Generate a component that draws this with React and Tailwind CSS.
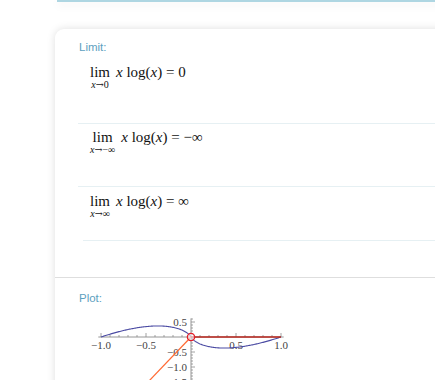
import React from "react";

const X0 = 101;
const Y0 = 26;
const SX = 90;
const SY = 30;

const px = (x) => X0 + x * SX;
const py = (y) => Y0 - y * SY;

// real part of x*log(x)
const bluePath = () => {
  let d = "";
  for (let i = 0; i <= 200; i++) {
    const x = -1 + i * 0.01;
    const v = Math.abs(x) < 1e-9 ? 0 : x * Math.log(Math.abs(x));
    d += (i === 0 ? "M" : "L") + px(x).toFixed(2) + " " + py(v).toFixed(2) + " ";
  }
  return d;
};

const Lim = ({ sub, expr, pl }) => (
  <div className={`flex items-start ${pl}`}>
    <div className="flex flex-col items-center">
      <span className="text-[15px] leading-[18px]">lim</span>
      <span className="text-[10px] leading-[10px] -mt-[1px]">{sub}</span>
    </div>
    <span className="text-[15px] leading-[18px] ml-[6px]">{expr}</span>
  </div>
);

const Arrow = () => <span style={{ fontFamily: "'DejaVu Serif', serif", fontSize: 9.5 }}>→</span>;

const Plot = () => {
  const minor = [];
  for (let i = -10; i <= 10; i++) {
    if (i === 0) continue;
    const major = i % 5 === 0;
    minor.push(
      <line key={"x" + i} x1={px(i / 10)} x2={px(i / 10)} y1={Y0} y2={Y0 - (major ? 4 : 2)} stroke="#8a8a8a" strokeWidth="0.8" />
    );
  }
  const yt = [];
  for (let i = -18; i <= 6; i++) {
    if (i === 0) continue;
    const major = i % 5 === 0;
    yt.push(
      <line key={"y" + i} x1={X0} x2={X0 + (major ? 4 : 2)} y1={py(i / 10)} y2={py(i / 10)} stroke="#8a8a8a" strokeWidth="0.8" />
    );
  }
  const lbl = { fontFamily: "'Liberation Serif', serif", fontSize: 11, fill: "#444" };
  return (
    <svg width="220" height="70" className="block overflow-visible">
      <line x1={px(-1.03)} x2={px(1.03)} y1={Y0} y2={Y0} stroke="#8a8a8a" strokeWidth="0.9" />
      <line x1={X0} x2={X0} y1={py(0.62)} y2={80} stroke="#8a8a8a" strokeWidth="0.9" />
      {minor}
      {yt}
      <g style={lbl}>
        <text x={px(-1)} y="38" textAnchor="middle">−1.0</text>
        <text x={px(-0.5)} y="38" textAnchor="middle">−0.5</text>
        <text x={px(0.5)} y="38" textAnchor="middle">0.5</text>
        <text x={px(1)} y="38" textAnchor="middle">1.0</text>
        <text x={X0 - 4} y={py(0.5) + 4} textAnchor="end">0.5</text>
        <text x={X0 - 4} y={py(-0.5) + 4} textAnchor="end">−0.5</text>
        <text x={X0 - 4} y={py(-1) + 4} textAnchor="end">−1.0</text>
        <text x={X0 - 4} y={py(-1.5) + 4} textAnchor="end">−1.5</text>
      </g>
      <path d={bluePath()} fill="none" stroke="#4b4ba3" strokeWidth="1.1" />
      <line x1={X0} y1={Y0} x2={px(1)} y2={Y0} stroke="#b8261c" strokeWidth="1.4" />
      <line x1={X0} y1={Y0} x2={px(-0.6)} y2={py(-0.6 * Math.PI)} stroke="#ff6a33" strokeWidth="1.2" />
      <circle cx={X0} cy={Y0} r="3.6" fill="#fff" fillOpacity="0.6" stroke="#e5202a" strokeWidth="1.4" />
    </svg>
  );
};

const App = () => {
  return (
    <main className="w-[435px] h-[380px] overflow-hidden bg-white relative">
      {/* top card, scrolled out */}
      <div className="ml-[57px] w-[420px] h-[2px] border-b-2 border-[#aed6e2] bg-white shadow-[0_3px_8px_rgba(0,0,0,0.10)]"></div>

      {/* limit + plot card */}
      <section
        className="mt-[27px] ml-[55px] w-[420px] pb-[40px] bg-white rounded-tl-[9px] shadow-[0_0_8px_rgba(0,0,0,0.13)]"
        style={{ fontFamily: "'Liberation Serif', serif", color: "#111" }}
      >
        <div className="pt-[11px]">
          <h2 className="pl-[24px] text-[11.5px] leading-[14px] text-[#5d9fc0]" style={{ fontFamily: "'Liberation Sans', Arial, sans-serif" }}>
            Limit:
          </h2>
          <div className="ml-[23px]">
            <div className="h-[70px] pt-[9px] border-b border-[#e6f0f3]">
              <Lim pl="pl-[12px]" sub={<span><i>x</i><Arrow />0</span>} expr={<span><i>x</i> log(<i>x</i>) = 0</span>} />
            </div>
            <div className="h-[63px] pt-[4px] border-b border-[#e6f0f3]">
              <Lim pl="pl-[12px]" sub={<span><i>x</i><Arrow />−∞</span>} expr={<span><i>x</i> log(<i>x</i>) = −∞</span>} />
            </div>
            <div className="h-[54px] pt-[5px] ml-[5px] border-b border-[#e6f0f3]">
              <Lim pl="pl-[7px]" sub={<span><i>x</i><Arrow />∞</span>} expr={<span><i>x</i> log(<i>x</i>) = ∞</span>} />
            </div>
          </div>
          <div className="h-[37px] border-b border-[#dedede]"></div>
        </div>
        <div className="pt-[13px]">
          <h2 className="pl-[24px] text-[11.5px] leading-[14px] text-[#5d9fc0]" style={{ fontFamily: "'Liberation Sans', Arial, sans-serif" }}>
            Plot:
          </h2>
          <div className="pl-[35px] pt-[6px]">
            <Plot />
          </div>
        </div>
      </section>
    </main>
  );
};

export default App;
